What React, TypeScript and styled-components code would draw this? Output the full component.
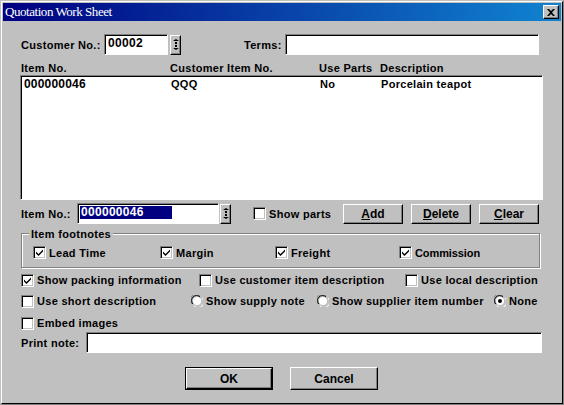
import React from "react";
import styled, { createGlobalStyle } from "styled-components";

const Global = createGlobalStyle`
  html, body { margin: 0; padding: 0; background: #c0c0c0; }
  #root { width: 564px; height: 405px; }
  * { box-sizing: border-box; }
`;

const Win = styled.div`
  width: 564px; height: 405px; background: #c0c0c0;
  border-top: 1px solid #c0c0c0; border-left: 1px solid #c0c0c0;
  border-right: 1px solid #808080; border-bottom: 1px solid #808080;
  font: bold 11px "Liberation Sans", Arial, sans-serif;
  color: #000;
  letter-spacing: 0.3px;
`;
const Inner = styled.div`
  height: 100%; border-top: 1px solid #fff; border-left: 1px solid #fff;
  border-right: 1px solid #000; border-bottom: 1px solid #000;
  padding: 1px;
  display: flex; flex-direction: column;
`;
const TitleBar = styled.div`
  height: 18px; flex: none; display: flex; align-items: center; justify-content: space-between;
  padding: 0 2px 0 2px;
  background: linear-gradient(90deg, #000080, #1084d0);
  color: #fff;
  font: 13px "Liberation Serif", serif;
  letter-spacing: -0.45px;
`;
const CloseBtn = styled.div`
  width: 16px; height: 14px; background: #c0c0c0;
  border: 1px solid; border-color: #fff #000 #000 #fff;
  box-shadow: inset -1px -1px 0 #808080;
  display: flex; align-items: center; justify-content: center;
`;
const Body = styled.div`
  flex: 1; padding: 13px 0 0 17px; display: flex; flex-direction: column; position: relative;
`;
const Row = styled.div<{ $h: number; $mt?: number; $pl?: number }>`
  display: flex; align-items: center; height: ${p => p.$h}px; margin-top: ${p => p.$mt ?? 0}px;
  padding-left: ${p => p.$pl ?? 0}px;
  flex: none;
`;
const Label = styled.span<{ $w?: number; $ml?: number }>`
  display: inline-block; white-space: nowrap;
  ${p => (p.$w ? `width: ${p.$w}px; flex: none;` : "")}
  ${p => (p.$ml ? `margin-left: ${p.$ml}px;` : "")}
`;
const Field = styled.div<{ $w: number; $h?: number }>`
  width: ${p => p.$w}px; height: ${p => p.$h ?? 21}px; flex: none; background: #fff;
  border: 1px solid; border-color: #808080 #fff #fff #808080;
  box-shadow: inset 1px 1px 0 #000;
  padding: 2px 0 0 3px;
  font-size: 12px;
  letter-spacing: 0.3px;
  line-height: 13px;
`;
const Selected = styled.span`
  display: block; width: 92px; height: 13px; background: #000080; color: #fff; margin-left: -1px; padding-left: 1px;
`;
const Spin = styled.div<{ $ml: number }>`
  width: 11px; height: 20px; flex: none; margin-left: ${p => p.$ml}px;
  background: #c0c0c0; border: 1px solid; border-color: #fff #000 #000 #fff;
  box-shadow: inset -1px -1px 0 #808080;
  display: flex; flex-direction: column; align-items: center; justify-content: center; gap: 1px;
`;
const Tri = styled.i<{ $up?: boolean }>`
  display: block; width: 0; height: 0; border-left: 3px solid transparent; border-right: 3px solid transparent;
  ${p => (p.$up ? "border-bottom: 2px solid #000;" : "border-top: 2px solid #000;")}
`;
const Dot = styled.i`
  display: block; width: 2px; height: 2px; background: #000;
`;
const ColHeads = styled.div`
  display: grid; grid-template-columns: 149px 149px 61px 1fr; height: 14px; line-height: 14px; margin-top: 6px; padding-left: 1px; flex: none;
`;
const ListBox = styled.div`
  width: 523px; height: 125px; flex: none; background: #fff;
  border: 1px solid; border-color: #808080 #fff #fff #808080;
  box-shadow: inset 1px 1px 0 #000;
  padding: 1px 0 0 3px;
`;
const ListRow = styled.div`
  display: grid; grid-template-columns: 147px 149px 61px 1fr; height: 14px; line-height: 14px;
`;
const Digits = styled.span`
  font-size: 12px; letter-spacing: 0.2px;
`;
const Btn = styled.div<{ $w: number; $h: number; $ml: number }>`
  width: ${p => p.$w}px; height: ${p => p.$h}px; margin-left: ${p => p.$ml}px; flex: none;
  background: #c0c0c0;
  border: 1px solid; border-color: #fff #000 #000 #fff;
  box-shadow: inset -1px -1px 0 #808080;
  display: flex; align-items: center; justify-content: center;
  font-size: 12px;
  letter-spacing: 0;
`;
const DefaultBtn = styled(Btn)`
  outline: 1px solid #000;
`;
const Group = styled.div`
  position: relative; width: 519px; height: 35px; margin-top: 9px; margin-left: 1px; flex: none;
  border: 1px solid #808080;
  box-shadow: 1px 1px 0 #fff, inset 1px 1px 0 #fff;
  display: grid; grid-template-columns: 127px 115px 124px 1fr; padding: 12px 0 0 11px; align-items: start;
`;
const Legend = styled.span`
  position: absolute; left: 7px; top: -7px; padding: 0 2px; background: #c0c0c0; line-height: 14px;
`;
const Tight = styled.span`
  letter-spacing: -0.1px;
`;
const BoxWrap = styled.span<{ $w?: number; $ml?: number }>`
  display: inline-flex; align-items: center; gap: 3px; white-space: nowrap; height: 13px;
  ${p => (p.$w ? `width: ${p.$w}px; flex: none;` : "")}
  ${p => (p.$ml ? `margin-left: ${p.$ml}px;` : "")}
`;
const Box = styled.span`
  width: 13px; height: 13px; flex: none; background: #fff;
  border: 1px solid; border-color: #808080 #fff #fff #808080;
  box-shadow: inset 1px 1px 0 #000, inset -1px -1px 0 #c0c0c0;
  display: flex; align-items: center; justify-content: center;
`;
const RadioDisc = styled.svg`
  width: 12px; height: 12px; flex: none; display: block;
`;

const Check = ({ on, w, ml, children }: { on?: boolean; w?: number; ml?: number; children: React.ReactNode }) => (
  <BoxWrap $w={w} $ml={ml}>
    <Box>
      {on && (
        <svg width="9" height="9" viewBox="0 0 9 9">
          <path d="M1 3.500 L3.500 6 L8 1.500 V3.500 L3.500 8 L1 5.500 Z" fill="#000" />
        </svg>
      )}
    </Box>
    {children}
  </BoxWrap>
);

const Radio = ({ on, w, children }: { on?: boolean; w?: number; children: React.ReactNode }) => (
  <BoxWrap $w={w}>
    <RadioDisc viewBox="0 0 12 12">
      <path d="M1 9 A5.500 5.500 0 0 1 9 1" fill="none" stroke="#808080" />
      <path d="M2 9 A4.500 4.500 0 0 1 9 2" fill="none" stroke="#000" />
      <path d="M3 11 A5.500 5.500 0 0 0 11 3" fill="none" stroke="#fff" />
      <circle cx="6" cy="6" r="4" fill="#fff" />
      {on && <circle cx="6" cy="6" r="2" fill="#000" />}
    </RadioDisc>
    {children}
  </BoxWrap>
);

const SpinButton = ({ ml }: { ml: number }) => (
  <Spin $ml={ml}>
    <Tri $up />
    <Dot />
    <Dot />
    <Tri />
  </Spin>
);

export default function App() {
  return (
    <Win>
      <Global />
      <Inner>
        <TitleBar>
          <span>Quotation Work Sheet</span>
          <CloseBtn>
            <svg width="8" height="7" viewBox="0 0 8 7">
              <path d="M0 0h2l2 2 2-2h2L5 3.500 8 7H6L4 5 2 7H0l3-3.500z" fill="#000" />
            </svg>
          </CloseBtn>
        </TitleBar>
        <Body>
          <Row $h={21} $pl={1}>
            <Label $w={83}>Customer No.:</Label>
            <Field $w={64}>00002</Field>
            <SpinButton ml={2} />
            <Label $ml={63} $w={41}>Terms:</Label>
            <Field $w={254} />
          </Row>
          <ColHeads>
            <span>Item No.</span>
            <span>Customer Item No.</span>
            <span>Use Parts</span>
            <span>Description</span>
          </ColHeads>
          <ListBox>
            <ListRow>
              <Digits>000000046</Digits>
              <span>QQQ</span>
              <span>No</span>
              <span>Porcelain teapot</span>
            </ListRow>
          </ListBox>
          <Row $h={21} $mt={3} $pl={1}>
            <Label $w={56}>Item No.:</Label>
            <Field $w={142}><Selected>000000046</Selected></Field>
            <SpinButton ml={1} />
            <Check w={90} ml={22}>Show parts</Check>
            <Btn $w={60} $h={20} $ml={0}><span><u>A</u>dd</span></Btn>
            <Btn $w={60} $h={20} $ml={8}><span><u>D</u>elete</span></Btn>
            <Btn $w={60} $h={20} $ml={8}><span><u>C</u>lear</span></Btn>
          </Row>
          <Group>
            <Legend>Item footnotes</Legend>
            <Check on>Lead Time</Check>
            <Check on>Margin</Check>
            <Check on>Freight</Check>
            <Check on><Tight>Commission</Tight></Check>
          </Group>
          <Row $h={14} $mt={5} $pl={1}>
            <Check on w={178}>Show packing information</Check>
            <Check w={206}>Use customer item description</Check>
            <Check>Use local description</Check>
          </Row>
          <Row $h={14} $mt={7} $pl={1}>
            <Check w={170}>Use short description</Check>
            <Radio w={126}>Show supply note</Radio>
            <Radio w={177}>Show supplier item number</Radio>
            <Radio on>None</Radio>
          </Row>
          <Row $h={14} $mt={8} $pl={1}>
            <Check>Embed images</Check>
          </Row>
          <Row $h={21} $mt={2} $pl={1}>
            <Label $w={65}>Print note:</Label>
            <Field $w={456} />
          </Row>
          <Row $h={23} $mt={14} $pl={166}>
            <DefaultBtn $w={86} $h={21} $ml={0}>OK</DefaultBtn>
            <Btn $w={88} $h={23} $ml={18}>Cancel</Btn>
          </Row>
        </Body>
      </Inner>
    </Win>
  );
}
